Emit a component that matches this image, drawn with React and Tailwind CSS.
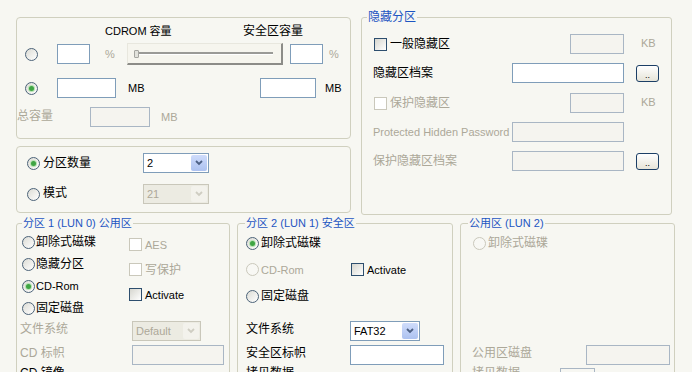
const FONT = "font-['Liberation_Sans','Noto_Sans_CJK_SC',sans-serif]";
const GRAY = 'text-[#aca899]';

const Radio = ({ checked, disabled }) => (
  <span
    className={`flex h-[13px] w-[13px] shrink-0 items-center justify-center rounded-full border ${
      disabled ? 'border-[#cac8bb] bg-[#f8f8f4]' : 'border-[#4c6379] bg-gradient-to-br from-[#dcdcd5] to-white'
    }`}
  >
    {checked && <span className="h-[5px] w-[5px] rounded-full bg-[#3fa544] ring-1 ring-[#b7e2b4]" />}
  </span>
);

const Check = ({ disabled }) => (
  <span
    className={`block h-[13px] w-[13px] shrink-0 border ${
      disabled ? 'border-[#cac8bb] bg-white' : 'border-[#2d4e6e] bg-gradient-to-br from-[#d6d6cf] to-white'
    }`}
  />
);

const Box = ({ w, disabled, white }) => (
  <span
    className={`block h-[20px] shrink-0 border ${w} ${
      disabled ? 'border-[#a9b6c4] bg-[#f5f4ef]' : 'border-[#7f9db9] bg-white'
    } ${white ? 'bg-white' : ''}`}
  />
);

const Select = ({ value, w, disabled }) => (
  <div
    className={`flex h-[20px] shrink-0 items-center border ${w} ${
      disabled ? 'border-[#c9c7ba] bg-[#ecebe2]' : 'border-[#7f9db9] bg-white'
    }`}
  >
    <span className={`flex-1 pl-[3px] text-[11px] ${disabled ? GRAY : 'text-black'}`}>{value}</span>
    <span
      className={`mr-px flex h-[16px] w-[16px] items-center justify-center rounded-[2px] ${
        disabled ? 'bg-[#f3f2ec]' : 'bg-gradient-to-b from-[#cfdcfb] to-[#adc2f0]'
      }`}
    >
      <svg width="8" height="6" viewBox="0 0 8 6">
        <path d="M1 1 L4 4 L7 1" stroke={disabled ? '#cfcdc2' : '#4d6185'} strokeWidth="1.8" fill="none" />
      </svg>
    </span>
  </div>
);

const Dots = () => (
  <span className="ml-[12px] flex h-[17px] w-[23px] shrink-0 items-end justify-center rounded-[3px] border border-[#1c3f66] bg-gradient-to-b from-white to-[#e6e4d8] pb-[1px] text-[9px] leading-[9px]">
    ..
  </span>
);

const Slider = () => (
  <div className="flex h-[22px] w-[156px] shrink-0 items-center border-t border-l border-t-[#e8e7de] border-l-[#e8e7de] border-r-2 border-b-2 border-r-[#8c8c88] border-b-[#8c8c88] bg-[#f6f5ee] pl-[6px] pr-[8px]">
    <span className="h-[8px] w-[5px] shrink-0 rounded-[1px] border border-[#a5a5a0] bg-[#e2e2dc]" />
    <span className="h-[3px] flex-1 border-t-2 border-b border-t-[#9a9a96] border-b-white" />
  </div>
);

const Group = ({ title, w, pl, children }) => (
  <fieldset className={`h-[170px] shrink-0 rounded-[3px] border border-[#d0d0bf] ${w} ${pl}`}>
    <legend className="px-px text-[11px] leading-[14px] text-[#1d55c2]">{title}</legend>
    {children}
  </fieldset>
);

export default function App() {
  return (
    <div className={`h-[372px] w-[692px] overflow-hidden bg-[#f7f7f2] pl-[16px] pt-[11px] text-[12px] leading-[14px] text-black ${FONT}`}>
      <div className="flex gap-[10px]">
        <div className="mt-[6px] flex w-[335px] flex-col gap-[7px]">
          <div className="h-[122px] rounded-[4px] border border-[#d0d0bf]">
            <div className="mt-[6px] flex h-[14px] items-center pl-[88px]">
              <span className="w-[138px] text-[11px]">CDROM 容量</span>
              <span>安全区容量</span>
            </div>
            <div className="mt-[5px] flex h-[22px] items-center">
              <span className="w-[40px] pl-[8px]"><Radio /></span>
              <Box w="w-[33px]" white />
              <span className={`w-[37px] pl-[15px] text-[11px] ${GRAY}`}>%</span>
              <Slider />
              <span className="ml-[7px]"><Box w="w-[33px]" white /></span>
              <span className={`ml-[6px] text-[11px] ${GRAY}`}>%</span>
            </div>
            <div className="mt-[13px] flex h-[20px] items-center">
              <span className="w-[40px] pl-[8px]"><Radio checked /></span>
              <Box w="w-[59px]" />
              <span className="w-[144px] pl-[12px] text-[11px]">MB</span>
              <Box w="w-[56px]" />
              <span className="ml-[9px] text-[11px]">MB</span>
            </div>
            <div className="mt-[9px] flex h-[20px] items-center">
              <span className={`mb-[2px] w-[73px] ${GRAY}`}>总容量</span>
              <Box w="w-[60px]" disabled />
              <span className={`ml-[11px] text-[11px] ${GRAY}`}>MB</span>
            </div>
          </div>
          <div className="h-[67px] rounded-[4px] border border-[#d0d0bf]">
            <div className="mt-[6px] flex h-[20px] items-center pl-[10px]">
              <Radio checked />
              <span className="ml-[3px] w-[100px]">分区数量</span>
              <Select value="2" w="w-[66px]" />
            </div>
            <div className="mt-[11px] flex h-[20px] items-center pl-[10px]">
              <Radio />
              <span className="ml-[3px] mb-[2px] w-[100px]">模式</span>
              <Select value="21" w="w-[66px]" disabled />
            </div>
          </div>
        </div>

        <fieldset className="h-[204px] w-[311px] rounded-[3px] border border-[#d0d0bf] pl-[5px]">
          <legend className="px-px leading-[12px] text-[#1d55c2]">隐藏分区</legend>
          <div className="mt-[11px] flex h-[20px] items-center pl-[7px]">
            <Check />
            <span className="ml-[3px] w-[180px]">一般隐藏区</span>
            <Box w="w-[54px]" disabled />
            <span className={`ml-[17px] -mt-[3px] text-[11px] ${GRAY}`}>KB</span>
          </div>
          <div className="mt-[9px] flex h-[20px] items-center">
            <span className="w-[145px] pl-[6px]">隐藏区档案</span>
            <Box w="w-[112px]" />
            <Dots />
          </div>
          <div className="mt-[10px] flex h-[20px] items-center pl-[7px]">
            <Check disabled />
            <span className={`ml-[3px] w-[180px] ${GRAY}`}>保护隐藏区</span>
            <Box w="w-[54px]" disabled />
            <span className={`ml-[17px] -mt-[3px] text-[11px] ${GRAY}`}>KB</span>
          </div>
          <div className="mt-[9px] flex h-[20px] items-center">
            <span className={`w-[145px] pl-[6px] text-[11px] ${GRAY}`}>Protected Hidden Password</span>
            <Box w="w-[112px]" disabled />
          </div>
          <div className="mt-[9px] flex h-[20px] items-center">
            <span className={`w-[145px] pl-[6px] ${GRAY}`}>保护隐藏区档案</span>
            <Box w="w-[112px]" disabled />
            <Dots />
          </div>
        </fieldset>
      </div>

      <div className="mt-px flex gap-[7px]">
        <Group title="分区 1 (LUN 0) 公用区" w="w-[214px]" pl="pl-[5px]">
          <div className="flex">
            <div className="mt-px w-[107px]">
              {[
                ['卸除式磁碟', false],
                ['隐藏分区', false],
                ['CD-Rom', true],
                ['固定磁盘', false],
              ].map(([label, on]) => (
                <div key={label} className="flex h-[22px] items-center">
                  <Radio checked={on} />
                  <span className={`ml-px ${label === 'CD-Rom' ? 'text-[11px]' : ''}`}>{label}</span>
                </div>
              ))}
            </div>
            <div className="mt-[2px]">
              <div className="flex h-[25px] items-center">
                <Check disabled />
                <span className={`ml-[3px] text-[11px] ${GRAY}`}>AES</span>
              </div>
              <div className="flex h-[25px] items-center">
                <Check disabled />
                <span className={`ml-[3px] ${GRAY}`}>写保护</span>
              </div>
              <div className="flex h-[25px] items-center">
                <Check />
                <span className="ml-[3px] text-[11px]">Activate</span>
              </div>
            </div>
          </div>
          <div className="mt-[2px] flex h-[20px] items-center">
            <span className={`-ml-[2px] mb-[4px] w-[112px] ${GRAY}`}>文件系统</span>
            <Select value="Default" w="w-[69px]" disabled />
          </div>
          <div className="mt-[4px] flex h-[20px] items-center">
            <span className={`-ml-[2px] mb-[4px] w-[112px] ${GRAY}`}>CD 标帜</span>
            <Box w="w-[92px]" disabled />
          </div>
          <div className="flex h-[14px] items-start">
            <span className="-ml-[2px] mt-[1px]">CD 镜像</span>
          </div>
        </Group>

        <Group title="分区 2 (LUN 1) 安全区" w="w-[216px]" pl="pl-[7px]">
          <div className="flex h-[26px] items-center pl-px">
            <Radio checked />
            <span className="ml-[2px]">卸除式磁碟</span>
          </div>
          <div className="flex h-[27px] items-center pl-px">
            <span className="flex w-[105px] items-center">
              <Radio disabled />
              <span className={`ml-[2px] text-[11px] ${GRAY}`}>CD-Rom</span>
            </span>
            <Check />
            <span className="ml-[3px] text-[11px]">Activate</span>
          </div>
          <div className="flex h-[26px] items-center pl-px">
            <Radio />
            <span className="ml-[2px]">固定磁盘</span>
          </div>
          <div className="mt-[12px] flex h-[20px] items-center">
            <span className="ml-px mb-[4px] w-[104px]">文件系统</span>
            <Select value="FAT32" w="w-[70px]" />
          </div>
          <div className="mt-[4px] flex h-[20px] items-center">
            <span className="ml-px mb-[4px] w-[104px]">安全区标帜</span>
            <Box w="w-[94px]" />
          </div>
          <div className="flex h-[14px] items-start">
            <span className="ml-px mt-[1px]">拷贝数据</span>
          </div>
        </Group>

        <Group title="公用区 (LUN 2)" w="w-[215px]" pl="pl-[7px]">
          <div className="flex h-[26px] items-center pl-[5px]">
            <Radio disabled />
            <span className={`ml-[2px] ${GRAY}`}>卸除式磁碟</span>
          </div>
          <div className="mt-[89px] flex h-[20px] items-center">
            <span className={`ml-[4px] mb-[4px] w-[114px] ${GRAY}`}>公用区磁盘</span>
            <Box w="w-[84px]" disabled />
          </div>
          <div className="flex h-[14px] items-start">
            <span className={`ml-[4px] mt-[1px] w-[88px] ${GRAY}`}>拷贝数据</span>
            <span className="mt-[3px] block h-[14px] w-[35px] border border-[#a9b6c4]" />
          </div>
        </Group>
      </div>
    </div>
  );
}
